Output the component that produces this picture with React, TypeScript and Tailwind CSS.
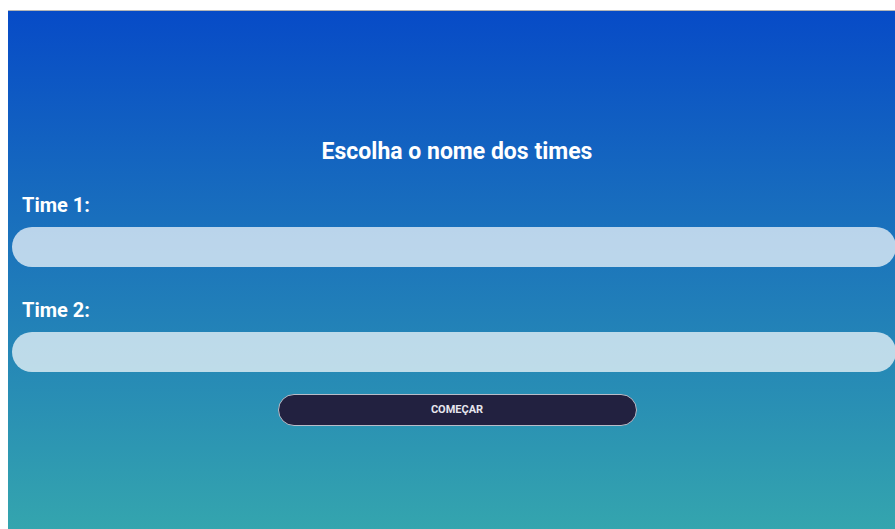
import React from "react";

export default function App() {
  return (
    <div className="min-h-screen bg-white pt-[10px] pl-[8px] overflow-hidden" style={{ fontFamily: "Roboto, 'Liberation Sans', sans-serif" }}>
      <div className="w-[898px] h-[519px] border-t border-[#b5b5b5] bg-[linear-gradient(to_bottom,#074bc7,#34a5ae)] flex flex-col">
        <h1 className="mt-[128px] text-center text-[23px] leading-[26px] font-bold text-white">
          Escolha o nome dos times
        </h1>

        <label className="mt-[28px] ml-[14px] text-[20px] leading-[24px] font-bold text-white">Time 1:</label>
        <input className="mt-[10px] ml-[4px] mr-[10px] h-[40px] rounded-full bg-white/70 outline-none px-5" />

        <label className="mt-[31px] ml-[14px] text-[20px] leading-[24px] font-bold text-white">Time 2:</label>
        <input className="mt-[10px] ml-[4px] mr-[10px] h-[40px] rounded-full bg-white/70 outline-none px-5" />

        <div className="mt-[22px] flex justify-center">
          <button className="w-[359px] h-[32px] rounded-full bg-[#222140] border border-[#b8bcc8] text-[11px] font-bold text-[#e6e6ee]">
            COMEÇAR
          </button>
        </div>
      </div>
    </div>
  );
}
